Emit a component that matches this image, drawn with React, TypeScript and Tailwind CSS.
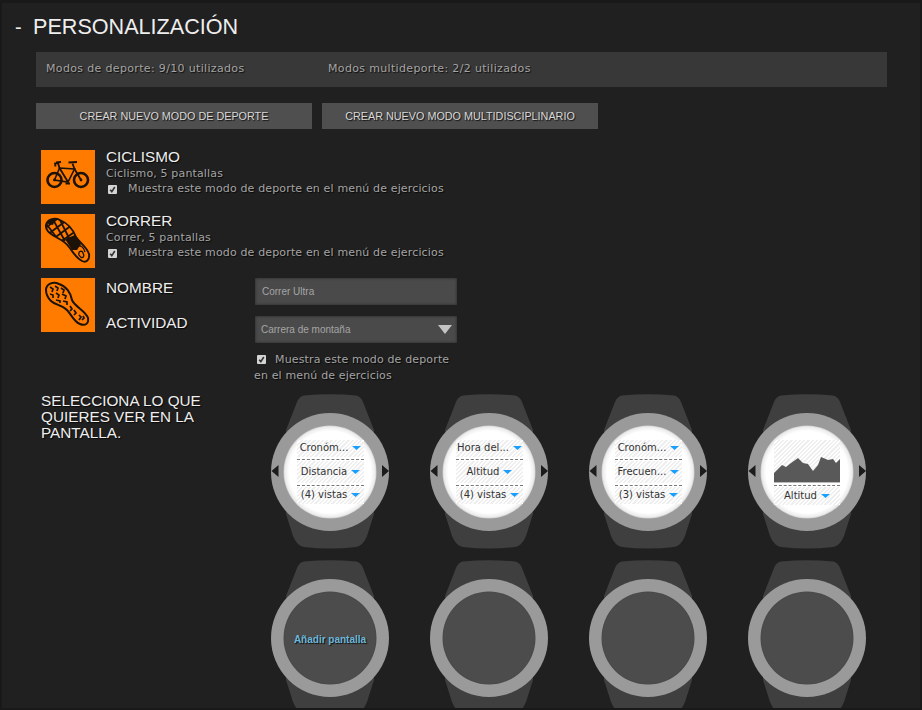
import React from "react";

const shadow = "[text-shadow:1px_1px_1px_rgba(0,0,0,0.8)]";
const base = `font-['DejaVu_Sans',sans-serif] text-[11px] text-[#a4a4a4] ${shadow}`;
const statText = `${base} tracking-[0.34px]`;
const body = `${base} tracking-[0.15px]`;
const head = `font-['Liberation_Sans',sans-serif] text-[15.3px] leading-4 text-[#eeeeee] ${shadow}`;

function Bike() {
  return (
    <svg viewBox="0 0 54 54" className="w-[54px] h-[54px]" fill="none" stroke="#1c1208" strokeWidth="2">
      <circle cx="13.5" cy="30" r="7" strokeWidth="2.6" />
      <circle cx="40" cy="30" r="7" strokeWidth="2.6" />
      <circle cx="13.5" cy="30" r="1.4" fill="#1c1208" stroke="none" />
      <circle cx="40" cy="30" r="1.4" fill="#1c1208" stroke="none" />
      <path d="M13.5 30 L18.5 18 L33.5 19 L27 32 Z" strokeWidth="1.6" />
      <path d="M18.5 18 L27 32 M33.5 19 L40 30 M31.5 13.5 L33.5 19" strokeWidth="1.8" />
      <path d="M27.5 12.5 L36 12 M18.5 18 L17 13 L14 13.5 L14.5 16.5 M15 12.5 L20 12 M24.5 33.5 L29 33.5" strokeWidth="1.8" />
    </svg>
  );
}

const soleA = "M5 11 C6 6 13 3 19 6 C26 9 32 15 35 23 C39 29 46 33 48 40 C49 46 45 49 41 47 C35 44 32 38 28 33 C24 27 18 25 13 22 C8 19 4 16 5 11Z";

function ShoeA() {
  return (
    <svg viewBox="0 0 54 54" className="w-[54px] h-[54px]" fill="none" stroke="#1c1208">
      <defs>
        <clipPath id="soleA">
          <path d={soleA} />
        </clipPath>
      </defs>
      <g clipPath="url(#soleA)">
        <path d="M6 3 L15 3 L12 11 L4 9Z M24 25 L34 21 L40 30 L36 36 L31 36Z" fill="#1c1208" stroke="none" />
        <path d="M2 16 L20 2 M6 21 L26 6 M12 25 L31 11 M19 28 L35 17 M10 2 L24 27 M18 4 L28 24 M3 7 L16 24" strokeWidth="1.8" />
        <path d="M35 33 C39 30 43 33 44 38 M38 41 C37 37 41 36 42 39 C44 43 41 46 38 41Z" strokeWidth="1.4" />
      </g>
      <path d={soleA} strokeWidth="1.9" />
    </svg>
  );
}

function ShoeB() {
  return (
    <svg viewBox="0 0 54 54" className="w-[54px] h-[54px]" fill="none" stroke="#1c1208">
      <path d="M5 12 C5 6 12 3 18 6 C25 8 30 15 31 22 C34 29 45 33 47 40 C48 46 44 48 39 46 C33 44 30 36 26 32 C21 27 14 27 10 23 C7 20 5 16 5 12Z" strokeWidth="2" />
      <path d="M9 9 l3 2 l-1 3 M14 8 l3 2 l-1 3 M20 10 l3 2 l-1 3 M9 16 l3 1 l0 3 M15 15 l3 2 l-1 3 M21 16 l4 2 l-1 3 M15 22 l4 1 l0 2 M22 23 l4 1 l0 3 M29 28 l2 3 l-2 2 M33 32 l2 3 l-2 2 M38 37 l2 2 l-2 3 M42 38 l1 2 l-2 2" strokeWidth="1.7" />
    </svg>
  );
}

const tile = "w-[54px] h-[54px] bg-[#ff7b00] shrink-0";

function Check({ className = "" }: { className?: string }) {
  return (
    <span className={`inline-flex items-center justify-center w-[9px] h-[9px] rounded-[1px] bg-[#d4d4d4] ${className}`}>
      <svg viewBox="0 0 9 9" className="w-[9px] h-[9px]" fill="none" stroke="#333" strokeWidth="1.6">
        <path d="M2.2 4.8 L3.8 6.6 L6.8 2" />
      </svg>
    </span>
  );
}

function Sport({ icon, title, sub }: { icon: React.ReactNode; title: string; sub: string }) {
  return (
    <div className="flex h-[54px] mb-[10px] ml-[5px]">
      <div className={tile}>{icon}</div>
      <div className="ml-[11px] flex flex-col">
        <div className={`${head} mt-[-1px]`}>{title}</div>
        <div className={`${body} tracking-[0.2px] leading-[14px] mt-[2px]`}>{sub}</div>
        <div className={`${body} leading-[16px] flex items-center`}>
          <Check className="ml-[2px] mr-[11px]" />
          <span>Muestra este modo de deporte en el menú de ejercicios</span>
        </div>
      </div>
    </div>
  );
}

function Strap() {
  return (
    <path
      d="M54 1.5 Q80 -1 106 1.5 Q111 2.5 113 8 L124 36 L124 120 L117 142 Q113 152 106 153 Q80 156 54 153 Q47 152 43 142 L36 120 L36 36 L47 8 Q49 2.5 54 1.5Z"
      fill="#3f3f3f"
    />
  );
}

const hatch = "bg-[repeating-linear-gradient(135deg,#efefef_0,#efefef_1.5px,#ffffff_1.5px,#ffffff_3px)]";
const watchText = "font-['DejaVu_Sans',sans-serif] text-[10px] text-[#333333] leading-none whitespace-nowrap";

function Blue() {
  return (
    <svg viewBox="0 0 9 4" className="w-[9px] h-[4px] shrink-0">
      <path d="M0 0 H9 L4.5 4Z" fill="#1a9fff" />
    </svg>
  );
}

function Field({ label, h }: { label: string; h: string }) {
  return (
    <div className={`${hatch} ${h} flex items-center justify-center gap-[4px] px-[2px] pb-[1px]`}>
      <span className={watchText}>{label}</span>
      <Blue />
    </div>
  );
}

const dash = "h-0 border-t border-dashed border-[#777777] my-[1.5px]";

function WatchFrame({ active, children }: { active: boolean; children?: React.ReactNode }) {
  return (
    <div className="relative w-[159px] h-[166px]">
      <svg viewBox="0 0 159 166" className="w-[159px] h-[166px] blur-[0.4px]">
        <defs>
          <radialGradient id={active ? "faceOn" : "faceOff"}>
            {active ? (
              <>
                <stop offset="0.88" stopColor="#ffffff" />
                <stop offset="0.97" stopColor="#ececec" />
                <stop offset="1" stopColor="#cccccc" />
              </>
            ) : (
              <>
                <stop offset="0.96" stopColor="#4c4c4c" />
                <stop offset="1" stopColor="#484848" />
              </>
            )}
          </radialGradient>
        </defs>
        <Strap />
        <circle cx="80" cy="78" r="59" fill="#9a9a9a" />
        <circle cx="80" cy="78" r="46.5" fill={`url(#${active ? "faceOn" : "faceOff"})`} />
        {active && (
          <>
            <path d="M28.5 71 L21.5 77 L28.5 83Z" fill="#1c1c1c" />
            <path d="M132 71 L139 77 L132 83Z" fill="#1c1c1c" />
          </>
        )}
      </svg>
      {children}
    </div>
  );
}

function Watch({ a, b, c }: { a: string; b: string; c: string }) {
  return (
    <WatchFrame active>
      <div className="absolute left-[47px] top-[46px] w-[67px] flex flex-col">
        <Field label={a} h="h-[17px]" />
        <div className={dash} />
        <Field label={b} h="h-[22px]" />
        <div className={dash} />
        <Field label={c} h="h-[17px]" />
      </div>
    </WatchFrame>
  );
}

function ChartWatch() {
  return (
    <WatchFrame active>
      <div className="absolute left-[47px] top-[46px] w-[66px] flex flex-col">
        <div className={`${hatch} h-[43px]`}>
          <svg viewBox="0 0 66 43" className="w-[66px] h-[43px]">
            <path
              d="M0 33 L8 25 L12 27 L17 23 L24 18 L29 23 L34 24 L39 31 L44 25 L47 17 L54 20 L59 19 L62 23 L66 19 L66 42 L0 42Z"
              fill="#595959"
            />
            <path d="M0 42.5 H66" stroke="#bbbbbb" />
          </svg>
        </div>
        <div className={dash} />
        <Field label="Altitud" h="h-[18px]" />
      </div>
    </WatchFrame>
  );
}

export default function App() {
  return (
    <div className="w-[922px] h-[710px] overflow-hidden relative bg-[#202020] border-t-[3px] border-b-[2px] border-x-[2px] border-[#191919]">
      <div className="flex items-center h-[48px] pl-[13px] font-['Liberation_Sans',sans-serif] text-[#eeeeee]">
        <span className="text-[20px] w-[18px]">-</span>
        <span className="text-[21.6px]">PERSONALIZACIÓN</span>
      </div>
      <div className="ml-[34px] mr-[33px] mt-[1px] h-[35px] bg-[#383838] flex items-center pl-[10px]">
        <span className={`${statText} w-[282px]`}>Modos de deporte: 9/10 utilizados</span>
        <span className={statText}>Modos multideporte: 2/2 utilizados</span>
      </div>
      <div className="flex gap-[10px] ml-[34px] mt-[16px]">
        {["CREAR NUEVO MODO DE DEPORTE", "CREAR NUEVO MODO MULTIDISCIPLINARIO"].map((t) => (
          <div
            key={t}
            className={`w-[276px] h-[26px] bg-[#4f4f4f] flex items-center justify-center font-['Liberation_Sans',sans-serif] text-[10.8px] text-[#d8d8d8] ${shadow}`}
          >
            {t}
          </div>
        ))}
      </div>
      <div className="ml-[34px] mt-[21px]">
        <Sport icon={<Bike />} title="CICLISMO" sub="Ciclismo, 5 pantallas" />
        <Sport icon={<ShoeA />} title="CORRER" sub="Correr, 5 pantallas" />
        <div className="flex ml-[5px]">
          <div className={tile}>
            <ShoeB />
          </div>
          <div className="ml-[11px] w-[149px] flex flex-col">
            <div className={`${head} mt-[2px]`}>NOMBRE</div>
            <div className={`${head} mt-[19px]`}>ACTIVIDAD</div>
          </div>
          <div className="w-[202px] flex flex-col">
            <div className="h-[27px] bg-[#4a4a4a] shadow-[inset_0_0_3px_rgba(0,0,0,0.5)] flex items-center pl-[7px] font-['Liberation_Sans',sans-serif] text-[10px] text-[#a5a5a5]">
              Correr Ultra
            </div>
            <div className="mt-[11px] h-[27px] bg-[#4a4a4a] shadow-[inset_0_0_3px_rgba(0,0,0,0.5)] flex items-center justify-between pl-[6px] pr-[5px] font-['Liberation_Sans',sans-serif] text-[10px] text-[#a5a5a5]">
              <span>Carrera de montaña</span>
              <svg viewBox="0 0 14 9" className="w-[14px] h-[9px]">
                <path d="M0 0 H14 L7 9Z" fill="#c4c4c4" />
              </svg>
            </div>
            <div className={`${body} mt-[9px] leading-[16px] ml-[-1px] whitespace-nowrap`}>
              <Check className="ml-[3px] mr-[9px] align-[-1px]" />
              Muestra este modo de deporte
              <br />
              en el menú de ejercicios
            </div>
          </div>
        </div>
      </div>
      <div className="flex ml-[39px] mt-[10px]">
        <div className={`${head} w-[209px] mt-[-1px] uppercase`}>
          Selecciona lo que
          <br />
          quieres ver en la
          <br />
          pantalla.
        </div>
        <div className="grid grid-cols-[repeat(4,159px)] grid-rows-[166px_166px]">
          <Watch a="Cronóm..." b="Distancia" c="(4) vistas" />
          <Watch a="Hora del..." b="Altitud" c="(4) vistas" />
          <Watch a="Cronóm..." b="Frecuen..." c="(3) vistas" />
          <ChartWatch />
          <WatchFrame active={false}>
            <div className={`absolute left-0 w-[160px] top-[72px] text-center font-['Liberation_Sans',sans-serif] font-bold text-[10px] text-[#6bb8da] ${shadow}`}>
              Añadir pantalla
            </div>
          </WatchFrame>
          <WatchFrame active={false} />
          <WatchFrame active={false} />
          <WatchFrame active={false} />
        </div>
      </div>
    </div>
  );
}
